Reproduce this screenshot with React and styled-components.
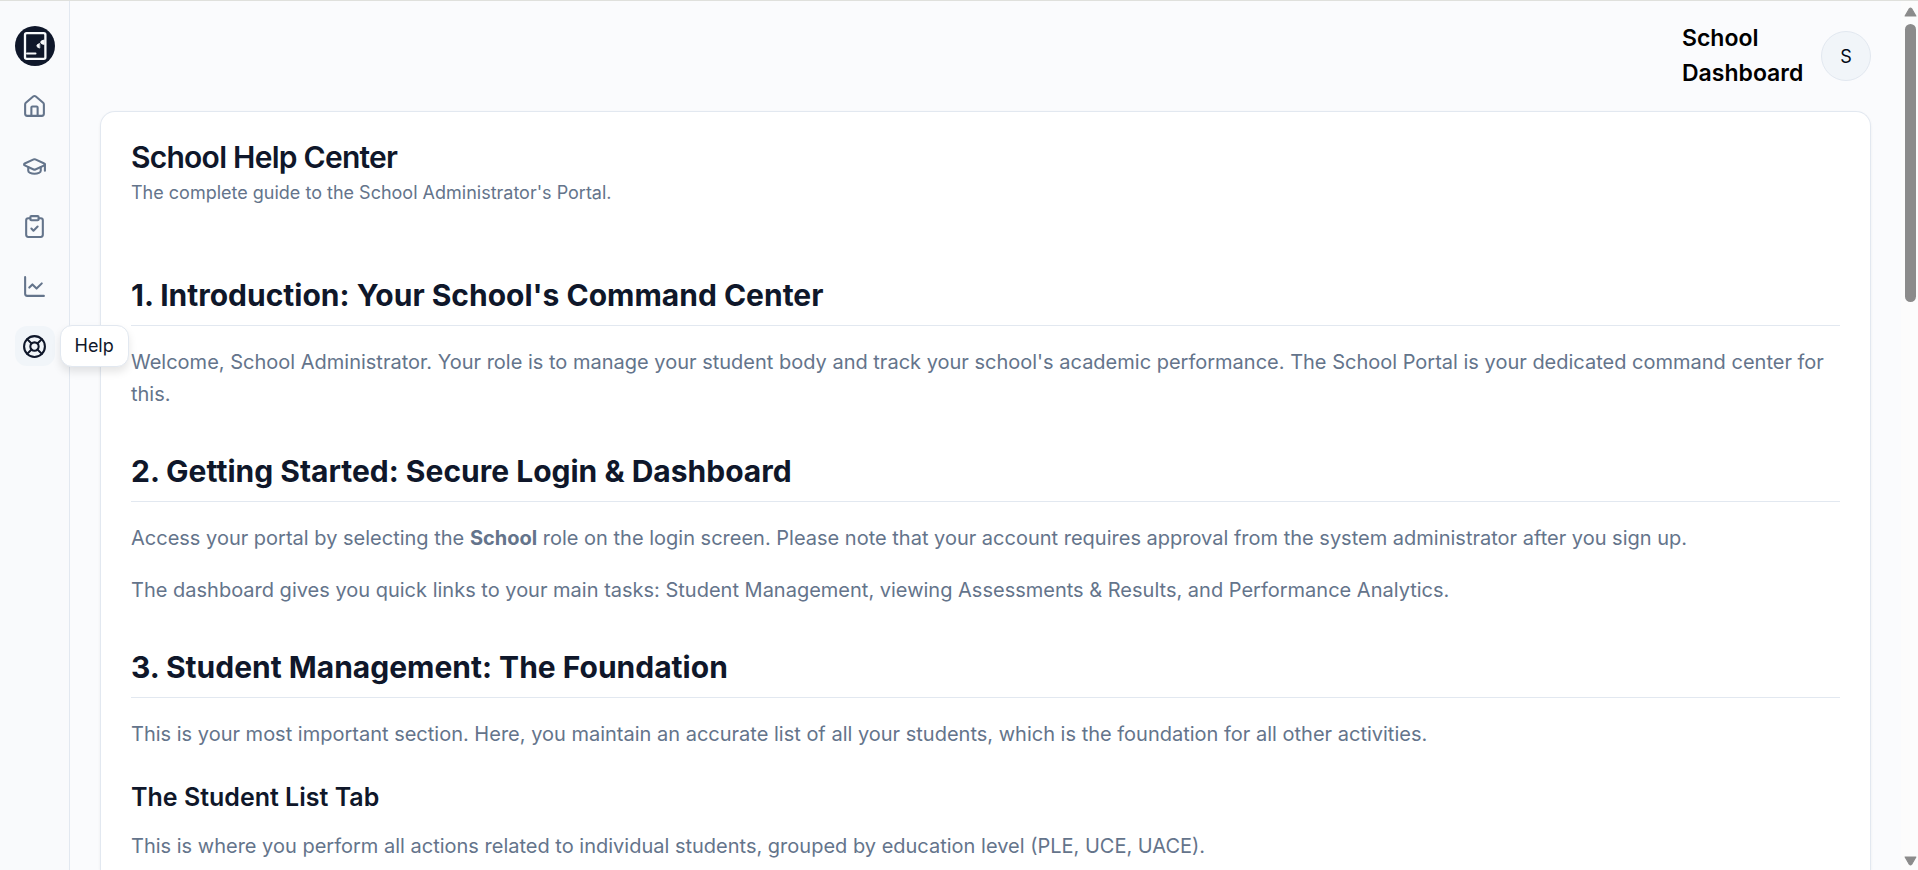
import React from 'react';
import styled, {createGlobalStyle} from 'styled-components';
import {House, GraduationCap, ClipboardCheck, ChartLine, LifeBuoy} from 'lucide-react';

const GlobalStyle = createGlobalStyle`
  *, *::before, *::after {
    box-sizing: border-box;
  }

  body {
    margin: 0;
    overflow: hidden;
    background: #fafbfd;
    color: #020817;
    font-family: Inter, "Liberation Sans", sans-serif;
    font-size: 20px;
  }

  h1, h2, h3, p {
    margin: 0;
  }
`;

const Page = styled.div`
  display: flex;
  height: 100vh;
  border-top: 1px solid #dfe0dc;
`;

const Sidebar = styled.nav`
  display: flex;
  flex: none;
  flex-direction: column;
  align-items: center;
  gap: 20px;
  width: 70px;
  padding-top: 25px;
  border-right: 1px solid #e2e8f0;
  background: #f9fafc;
`;

const LogoLink = styled.a`
  display: flex;
  width: 40px;
  height: 40px;
  border-radius: 50%;
  background: #0f172a;
`;

const NavItem = styled.div`
  position: relative;
  display: flex;
  align-items: center;
`;

const NavLink = styled.a`
  display: flex;
  align-items: center;
  justify-content: center;
  width: 40px;
  height: 40px;
  border-radius: 12px;
  color: ${props => props.$active ? '#0f172a' : '#64748b'};
  background: ${props => props.$active ? '#f1f5f9' : 'transparent'};
`;

const Tooltip = styled.span`
  position: absolute;
  z-index: 1;
  left: 100%;
  margin-left: 5px;
  padding: 8px 14px;
  border: 1px solid #e2e8f0;
  border-radius: 12px;
  background: #fff;
  box-shadow: 0 5px 8px rgba(0, 0, 0, 0.1);
  color: #0f172a;
  font-size: 18px;
  line-height: 24px;
`;

const Main = styled.div`
  display: flex;
  flex: 1;
  flex-direction: column;
  min-width: 0;
  padding: 20px 30px 0;
`;

const Header = styled.header`
  display: flex;
  align-items: center;
  justify-content: flex-end;
  gap: 20px;
  margin-bottom: 20px;
`;

const HeaderTitle = styled.div`
  width: 119px;
  color: #000;
  font-size: 23px;
  font-weight: 600;
  line-height: 35px;
`;

const Avatar = styled.button`
  width: 50px;
  height: 50px;
  padding: 0;
  border: 1px solid #e2e8f0;
  border-radius: 50%;
  background: #f1f5f9;
  color: #020817;
  font-family: inherit;
  font-size: 18px;
`;

const Card = styled.main`
  flex: 1;
  min-height: 0;
  overflow: hidden;
  padding: 30px 30px 0;
  border: 1px solid #e2e8f0;
  border-bottom: 0;
  border-radius: 15px 15px 0 0;
  background: #fff;
  box-shadow: 0 1px 3px rgba(0, 0, 0, 0.06);
`;

const CardTitle = styled.h1`
  color: #0f172a;
  font-size: 30px;
  font-weight: 600;
  letter-spacing: -0.025em;
  line-height: 30px;
`;

const CardSubtitle = styled.p`
  margin-top: 8px;
  color: #64748b;
  font-size: 18px;
  line-height: 25px;
`;

const Guide = styled.div`
  padding-top: 29px;
`;

const SectionTitle = styled.h2`
  margin-top: 41px;
  padding-bottom: 10px;
  border-bottom: 1px solid #e2e8f0;
  color: #0f172a;
  font-size: 30px;
  font-weight: 700;
  line-height: 40px;
`;

const Paragraph = styled.p`
  margin-top: 20px;
  color: #64748b;
  line-height: 32px;
`;

const SubTitle = styled.h3`
  margin-top: 30px;
  color: #0f172a;
  font-size: 25px;
  font-weight: 600;
  line-height: 35px;

  & + ${Paragraph} {
    margin-top: 15px;
  }
`;

const Scrollbar = styled.div`
  display: flex;
  flex: none;
  flex-direction: column;
  align-items: center;
  justify-content: space-between;
  width: 17px;
  padding: 6px 1px 4px 3px;
  background: #fcfcfc;
`;

const ScrollTop = styled.div`
  display: flex;
  flex-direction: column;
  align-items: center;
  gap: 7px;
`;

const Thumb = styled.div`
  width: 11px;
  height: 278px;
  border-radius: 6px;
  background: #8b8b8b;
`;

const links = [
    {label: 'Dashboard', icon: House},
    {label: 'Students', icon: GraduationCap},
    {label: 'Assessments', icon: ClipboardCheck},
    {label: 'Analytics', icon: ChartLine},
    {label: 'Help', icon: LifeBuoy, active: true},
];

const Logo = () => (
    <svg width="40" height="40" viewBox="0 0 40 40" fill="none" stroke="#f8fafc" strokeLinecap="round" strokeLinejoin="round" aria-hidden="true">
        <rect x="10" y="7.2" width="20.4" height="25.6" rx="1.6" strokeWidth="2.3"/>
        <path d="M12 27.4H20.500" strokeWidth="2"/>
        <path d="M24.400 17.600Q21.600 18.400 21.800 19.800Q22 21.600 24.400 22Z" fill="#f8fafc" strokeWidth="0.8"/>
        <path d="M29 14Q25.600 14.600 25.600 16.200Q25.600 18 29 18.400Z" fill="#f8fafc" strokeWidth="0.8"/>
    </svg>
);

const Arrow = ({down}) => (
    <svg width="13" height="10" viewBox="0 0 12 10" preserveAspectRatio="none" aria-hidden="true">
        <path
            d={down ? 'M1 1H11L7 8.500Q6 9.500 5 8.500Z' : 'M1 9H11L7 1.500Q6 0.500 5 1.500Z'}
            fill="#8b8b8b"
            stroke="#8b8b8b"
            strokeLinejoin="round"
        />
    </svg>
);

const App = () => {
    return (
        <>
            <GlobalStyle/>
            <Page>
                <Sidebar>
                    <LogoLink href="#" aria-label="Home"><Logo/></LogoLink>
                    {links.map(({label, icon: Icon, active}) => (
                        <NavItem key={label}>
                            <NavLink href="#" aria-label={label} $active={active}><Icon size={25}/></NavLink>
                            {active && <Tooltip role="tooltip">{label}</Tooltip>}
                        </NavItem>
                    ))}
                </Sidebar>
                <Main>
                    <Header>
                        <HeaderTitle>School Dashboard</HeaderTitle>
                        <Avatar type="button">S</Avatar>
                    </Header>
                    <Card>
                        <CardTitle>School Help Center</CardTitle>
                        <CardSubtitle>The complete guide to the School Administrator's Portal.</CardSubtitle>
                        <Guide>
                            <SectionTitle>1. Introduction: Your School's Command Center</SectionTitle>
                            <Paragraph>
                                Welcome, School Administrator. Your role is to manage your student body and track your
                                school's academic performance. The School Portal is your dedicated command center for this.
                            </Paragraph>
                            <SectionTitle>2. Getting Started: Secure Login &amp; Dashboard</SectionTitle>
                            <Paragraph>
                                Access your portal by selecting the <strong>School</strong> role on the login screen.
                                Please note that your account requires approval from the system administrator after you sign up.
                            </Paragraph>
                            <Paragraph>
                                The dashboard gives you quick links to your main tasks: Student Management, viewing
                                Assessments &amp; Results, and Performance Analytics.
                            </Paragraph>
                            <SectionTitle>3. Student Management: The Foundation</SectionTitle>
                            <Paragraph>
                                This is your most important section. Here, you maintain an accurate list of all your
                                students, which is the foundation for all other activities.
                            </Paragraph>
                            <SubTitle>The Student List Tab</SubTitle>
                            <Paragraph>
                                This is where you perform all actions related to individual students, grouped by
                                education level (PLE, UCE, UACE).
                            </Paragraph>
                        </Guide>
                    </Card>
                </Main>
                <Scrollbar aria-hidden="true">
                    <ScrollTop>
                        <Arrow/>
                        <Thumb/>
                    </ScrollTop>
                    <Arrow down/>
                </Scrollbar>
            </Page>
        </>
    );
};

export default App;
